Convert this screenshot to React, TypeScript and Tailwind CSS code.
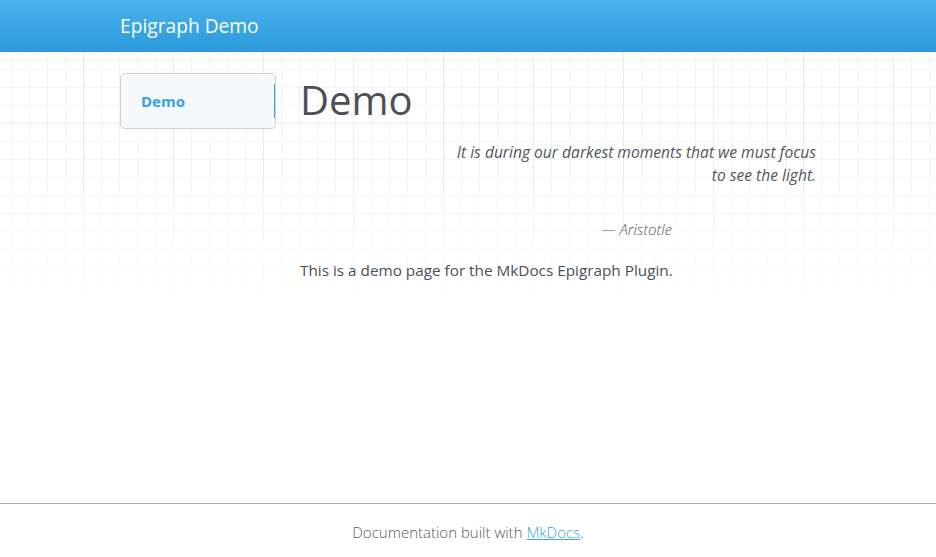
import React from "react";

export default function App() {
  return (
    <div className="relative min-h-[557px] w-[936px] bg-white font-['Open_Sans','Noto_Sans',sans-serif] text-[#4b4f56] flex flex-col">
      <div
        aria-hidden
        className="pointer-events-none absolute left-0 top-0 h-[310px] w-full bg-[linear-gradient(to_right,#ebebeb_1px,transparent_1px),linear-gradient(to_bottom,#ebebeb_1px,transparent_1px),linear-gradient(to_right,#f3f3f3_1px,transparent_1px),linear-gradient(to_bottom,#f3f3f3_1px,transparent_1px)] bg-[size:90px_90px,90px_90px,18px_18px,18px_18px] bg-[position:83px_33px,83px_33px,11px_15px,11px_15px] [mask-image:linear-gradient(to_bottom,black_55%,transparent_97%)]"
      />
      <header className="relative h-[52px] bg-[linear-gradient(to_bottom,#4bb1eb,#2a9bdd)] flex items-center pl-[120px]">
        <span className="text-white text-[19.2px] leading-none">Epigraph Demo</span>
      </header>
      <main className="relative flex pl-[120px] pt-[21px] flex-1">
        <nav className="w-[156px] h-[56px] shrink-0 rounded-[5px] border border-[#cfd2d6] bg-[#f7f8fa] flex items-center pl-[20px] relative">
          <span className="text-[#31a3e6] font-bold text-[15px]">Demo</span>
          <span className="absolute right-0 top-[10px] h-[34px] w-[1.5px] bg-[#31a3e6]" />
        </nav>
        <div className="ml-[24px] w-[516px]">
          <h1 className="text-[40px] leading-[56px] text-[#4b5058] -mt-[1px]">Demo</h1>
          <blockquote className="mt-[13px] text-right italic text-[15.6px] leading-[23px] text-[#52565c]">
            <p>It is during our darkest moments that we must focus<br />to see the light.</p>
            <p className="mt-[31px] pr-[144px] font-light text-[15px]">— Aristotle</p>
          </blockquote>
          <p className="mt-[17px] text-[15.3px] leading-[24px] text-[#4b4f56]">This is a demo page for the MkDocs Epigraph Plugin.</p>
        </div>
      </main>
      <footer className="relative mt-auto border-t border-[#aaaaaa] h-[54px] pt-[4px] flex items-center justify-center text-[15px] font-light text-[#555a60]">
        <span>
          Documentation built with <a href="#" className="text-[#3aa3e3] underline">MkDocs</a>.
        </span>
      </footer>
    </div>
  );
}
